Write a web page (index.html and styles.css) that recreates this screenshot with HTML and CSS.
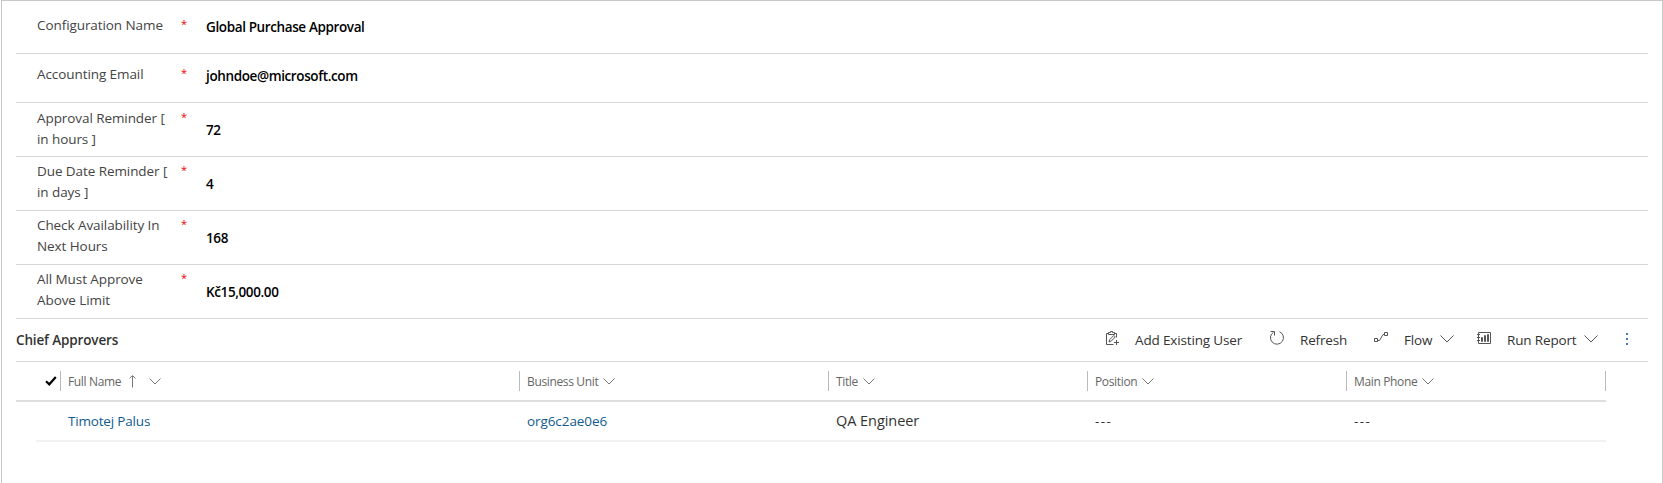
FILE: index.html
```html
<!DOCTYPE html>
<html lang="en">
<head>
<meta charset="utf-8">
<title>Approval Configuration</title>
<link rel="stylesheet" href="styles.css">
</head>
<body>
<main class="panel">
  <section class="fields">
    <div class="field first"><div class="label">Configuration Name</div><span class="req">*</span><div class="value">Global Purchase Approval</div></div>
    <div class="field short"><div class="label">Accounting Email</div><span class="req">*</span><div class="value">johndoe@microsoft.com</div></div>
    <div class="field"><div class="label">Approval Reminder [<br>in hours ]</div><span class="req">*</span><div class="value">72</div></div>
    <div class="field raised"><div class="label">Due Date Reminder [<br>in days ]</div><span class="req">*</span><div class="value">4</div></div>
    <div class="field raised"><div class="label">Check Availability In<br>Next Hours</div><span class="req">*</span><div class="value">168</div></div>
    <div class="field raised"><div class="label">All Must Approve<br>Above Limit</div><span class="req">*</span><div class="value">Kč15,000.00</div></div>
  </section>
  <header class="bar">
    <h2 class="title">Chief Approvers</h2>
    <div class="commands">
      <div class="cmd add">
        <svg class="icon" width="15" height="16" viewBox="0 0 15 16"><path d="M3.500 3.500h-2v11h7M9.500 3.500h2v4M3.500 2.500h2v-1h2v1h2v2h-6zM4 12l.8-2.500 4-4 1.500 1.500-4 4zM11.500 10v5M9 12.500h5"/></svg>
        <span>Add Existing User</span>
      </div>
      <div class="cmd refresh">
        <svg class="icon" width="16" height="16" viewBox="0 0 16 16"><path d="M10.500 1.700A6.500 6.500 0 1 1 4.500 2.200M1.500 1.500h4v4"/></svg>
        <span>Refresh</span>
      </div>
      <div class="cmd flow">
        <svg class="icon" width="16" height="16" viewBox="0 0 16 16"><path d="M.5 8.500h3v3h-3zM10.500 2.500h3v3h-3zM4 10.500h1.500l3.500-6h1.500"/></svg>
        <span>Flow</span>
        <svg class="chev" width="14" height="8" viewBox="0 0 14 8"><path d="M.5.5 7 7 13.500.5"/></svg>
      </div>
      <div class="cmd report">
        <svg class="icon" width="15" height="16" viewBox="0 0 15 16"><path d="M1.500 2.500h12v11h-12zM0 4.500h3M0 7.500h3M0 10.500h3M4.500 7.500h1v4h-1zM7.500 5.500h1v6h-1zM10.500 4.500h1v7h-1z"/></svg>
        <span>Run Report</span>
        <svg class="chev" width="14" height="8" viewBox="0 0 14 8"><path d="M.5.5 7 7 13.500.5"/></svg>
      </div>
      <svg class="more" width="2" height="14" viewBox="0 0 2 14"><path d="M0 1h2v2H0zM0 6h2v2H0zM0 11h2v2H0z"/></svg>
    </div>
  </header>
  <section class="table">
    <div class="row head">
      <div class="check"><svg width="12" height="10" viewBox="0 0 12 10"><path d="M1 5.200 4.300 8.300 10.800 1"/></svg></div>
      <div class="cell fullname"><span>Full Name</span>
        <svg class="sort" width="7" height="13" viewBox="0 0 7 13"><path d="M3.500 12.500V1M.5 3.500l3-3 3 3"/></svg>
        <svg class="chev" width="12" height="7" viewBox="0 0 12 7"><path d="M.5.5 6 6 11.500.5"/></svg></div>
      <div class="cell"><span>Business Unit</span><svg class="chev" width="12" height="7" viewBox="0 0 12 7"><path d="M.5.5 6 6 11.500.5"/></svg></div>
      <div class="cell"><span>Title</span><svg class="chev" width="12" height="7" viewBox="0 0 12 7"><path d="M.5.5 6 6 11.500.5"/></svg></div>
      <div class="cell"><span>Position</span><svg class="chev" width="12" height="7" viewBox="0 0 12 7"><path d="M.5.5 6 6 11.500.5"/></svg></div>
      <div class="cell last"><span>Main Phone</span><svg class="chev" width="12" height="7" viewBox="0 0 12 7"><path d="M.5.5 6 6 11.500.5"/></svg></div>
    </div>
    <div class="row data">
      <div></div>
      <div class="item link">Timotej Palus</div>
      <div class="item link org">org6c2ae0e6</div>
      <div class="item job">QA Engineer</div>
      <div class="item dash">---</div>
      <div class="item dash">---</div>
    </div>
  </section>
</main>
</body>
</html>
```
FILE: styles.css
```css
* { box-sizing: border-box; }
body {
  margin: 0;
  background: #fff;
  font-family: "Open Sans", "Noto Sans", sans-serif;
  font-size: 13.5px;
  color: #333;
  overflow: hidden;
}
.panel {
  height: 483px;
  margin-left: 1px;
  padding: 0 14px;
  border: 1px solid #c8c8c8;
  border-bottom: 0;
}
.field {
  display: grid;
  grid-template-columns: 144px 24px 1fr;
  height: 54px;
  padding: 5px 0 0 21px;
  border-bottom: 1px solid #d6d6d6;
  line-height: 21px;
}
.first { height: 53px; padding-top: 14px; }
.short { height: 49px; padding-top: 10px; }
.raised { padding-top: 4px; }
.label { color: #444; white-space: nowrap; letter-spacing: -0.08px; }
.req { color: #e00; font-size: 11px; line-height: 18px; }
.value {
  color: #000;
  font-weight: 600;
  padding: 12px 0 0 1px;
  letter-spacing: -0.38px;
}
.raised .value { padding-top: 13px; }
.first .value, .short .value { padding-top: 2px; }
.bar {
  display: flex;
  justify-content: space-between;
  align-items: center;
  height: 43px;
  padding-bottom: 1px;
  border-bottom: 1px solid #d6d6d6;
}
.title { margin: 0; font-size: 13.5px; font-weight: 600; letter-spacing: -0.14px; }
.commands { display: flex; align-items: center; width: 543px; height: 100%; }
.cmd { display: flex; align-items: center; white-space: nowrap; letter-spacing: -0.15px; }
.cmd span { line-height: 20px; }
.icon { margin-top: -3px; }
.add { width: 164px; gap: 15px; }
.refresh { width: 105px; gap: 15px; }
.flow { width: 103px; gap: 14px; }
.report { width: 149px; gap: 15px; }
.cmd .chev { margin-top: -2px; }
.flow .chev { margin-left: -6px; }
.report .chev { margin-left: -8px; }
svg { flex: none; fill: none; stroke: #555; stroke-width: 1; }
.more { fill: #4a78b0; stroke: none; margin-top: -2px; }
.table { width: 1590px; }
.row { display: grid; grid-template-columns: 44px 459px 309px 259px 259px 260px; }
.head {
  height: 40px;
  border-bottom: 2px solid #dedede;
  align-items: center;
  font-size: 12px;
  color: #666;
}
.check { display: flex; padding-left: 29px; }
.check svg { stroke: #000; stroke-width: 2.2; }
.cell {
  display: flex;
  align-items: center;
  height: 20px;
  padding-left: 7px;
  border-left: 1px solid #bbb;
  letter-spacing: -0.35px;
}
.cell .chev { margin-left: 5px; stroke: #777; }
.cell .sort { margin-left: 8px; stroke: #777; }
.fullname .chev { margin-left: 13px; }
.last { border-right: 1px solid #bbb; }
.data {
  height: 40px;
  margin-left: 20px;
  grid-template-columns: 24px 459px 309px 259px 259px 260px;
  align-items: center;
  border-bottom: 2px solid #f2f2f2;
}
.item { padding-left: 8px; line-height: 20px; }
.link { color: #115b8f; letter-spacing: -0.18px; }
.org { letter-spacing: -0.08px; }
.job { font-size: 14.5px; letter-spacing: -0.05px; }
.dash { letter-spacing: 1.4px; }
```
